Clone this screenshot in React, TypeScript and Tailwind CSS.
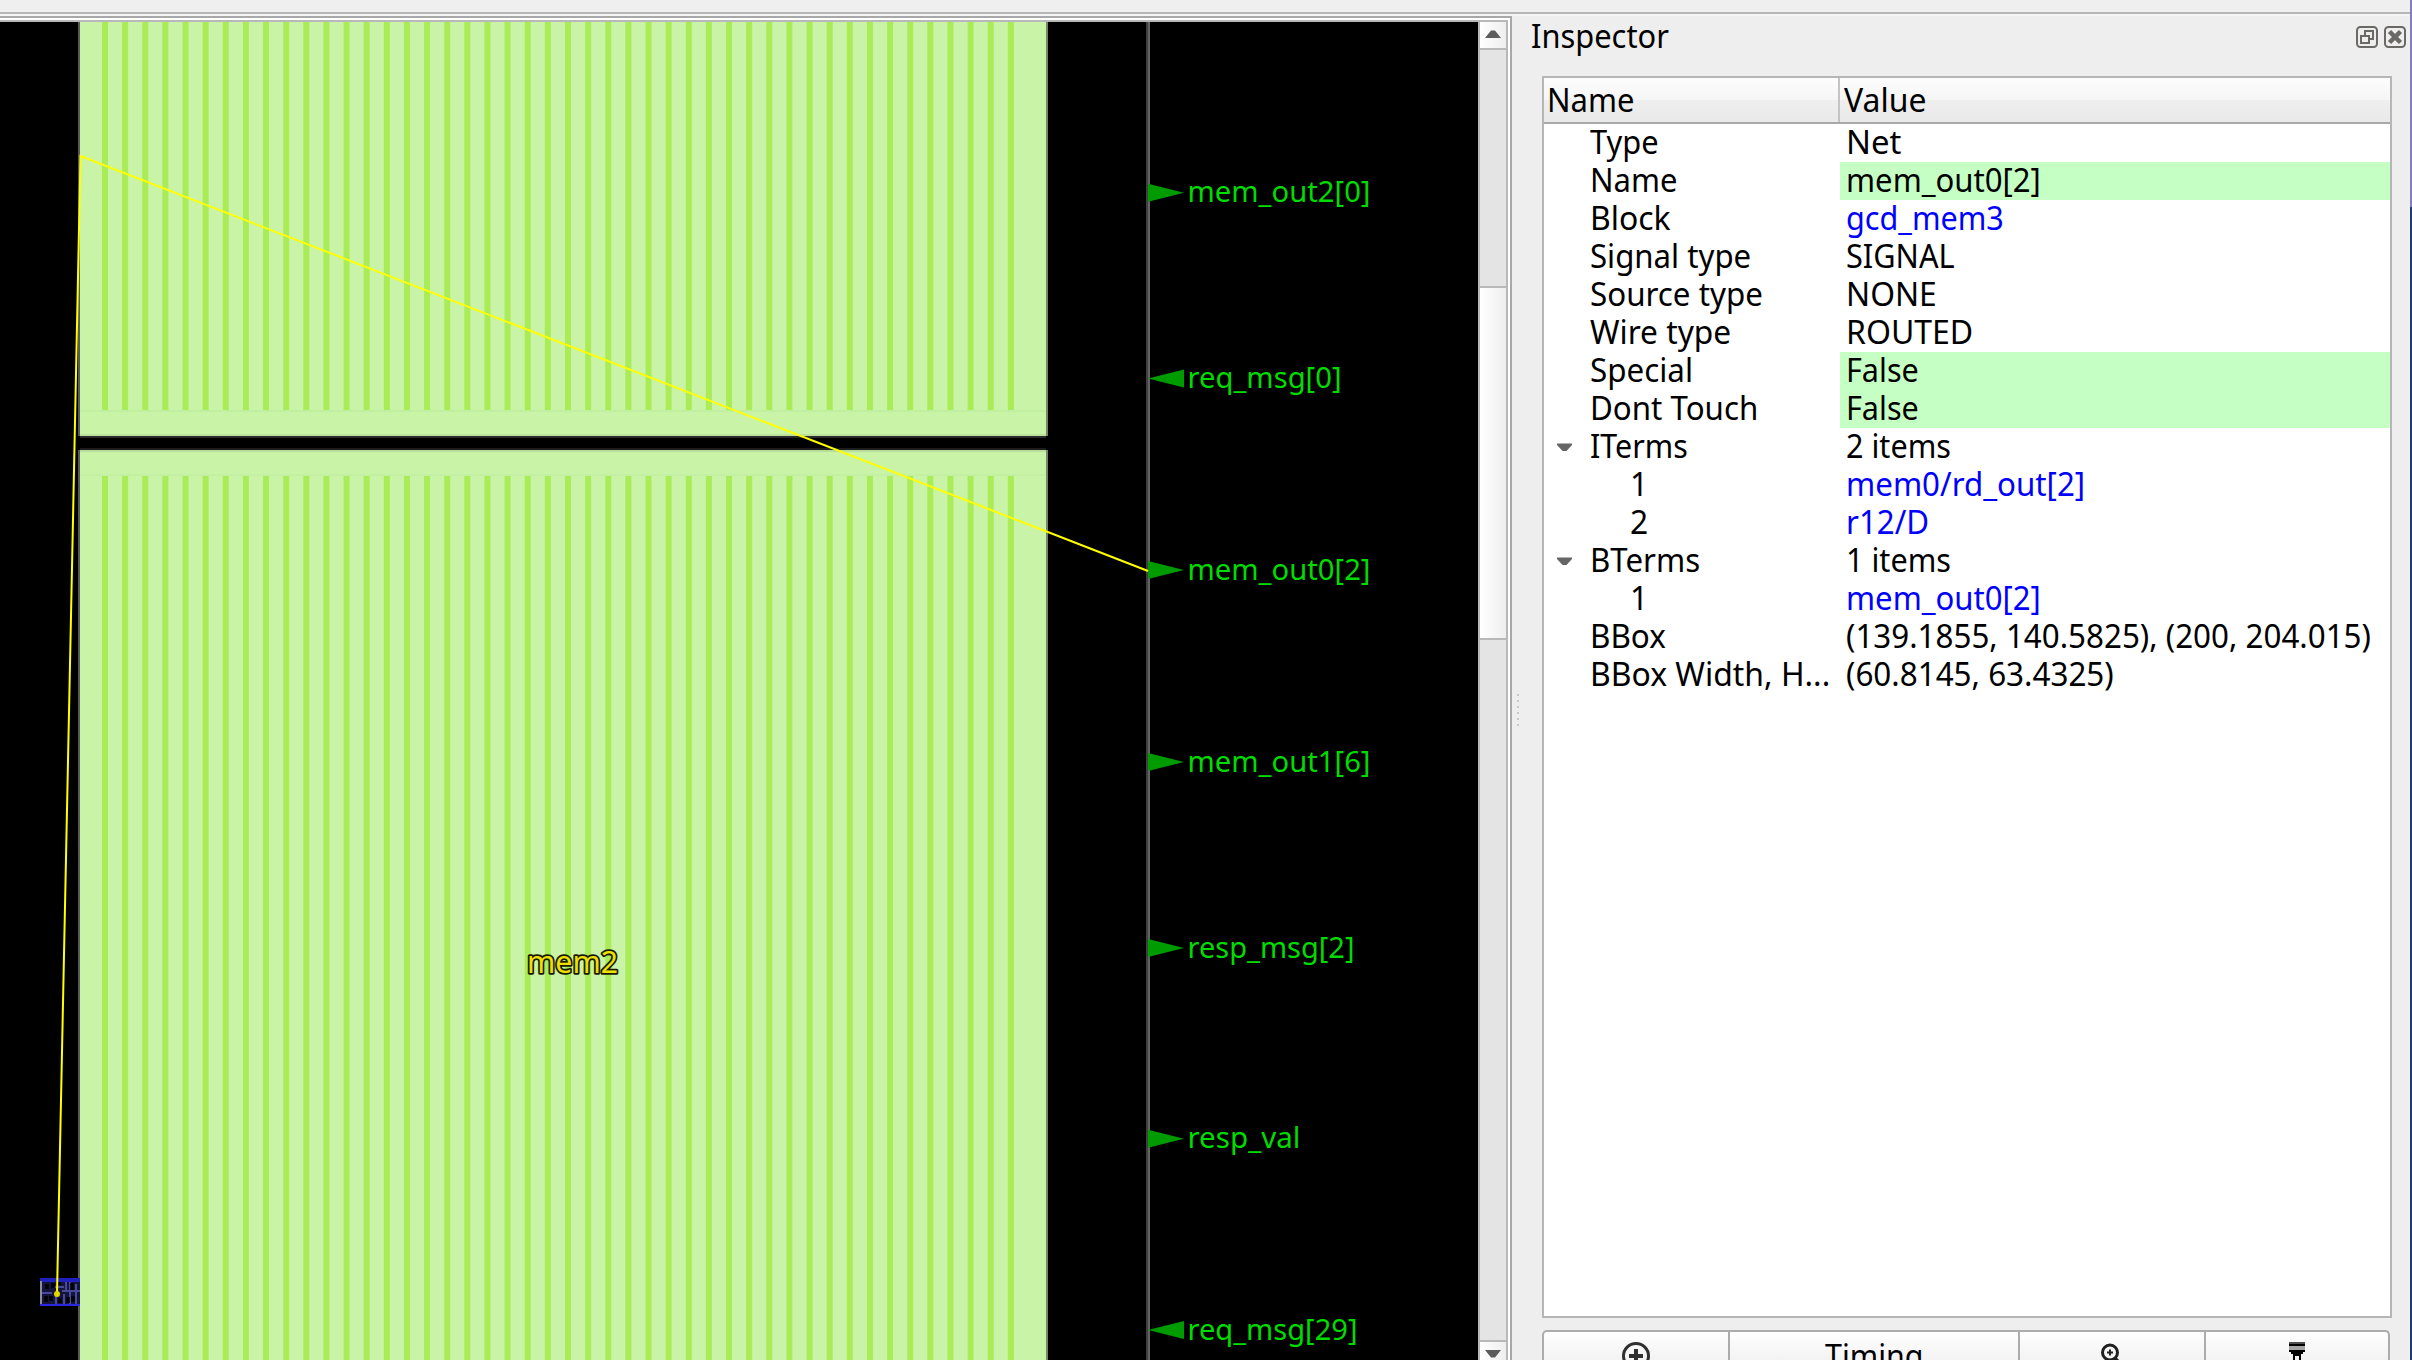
import { useLayoutEffect, useRef, type ReactNode } from "react";

/** Text squeezed or stretched horizontally to an exact width. */
function Fit({ w, children, className = "" }: { w: number; children: ReactNode; className?: string }) {
  const ref = useRef<HTMLSpanElement>(null);
  useLayoutEffect(() => {
    const el = ref.current;
    if (el) el.style.transform = `scaleX(${w / el.offsetWidth})`;
  }, [w]);
  return (
    <span className="block shrink-0" style={{ width: w }}>
      <span ref={ref} className={`inline-block origin-left whitespace-pre ${className}`}>
        {children}
      </span>
    </span>
  );
}

type Row = { name: string; nw: number; value: string; vw: number; kind?: "edit" | "link"; level?: 1; open?: boolean };

const rows: Row[] = [
  { name: "Type", nw: 69, value: "Net", vw: 55 },
  { name: "Name", nw: 87, value: "mem_out0[2]", vw: 195, kind: "edit" },
  { name: "Block", nw: 81, value: "gcd_mem3", vw: 158, kind: "link" },
  { name: "Signal type", nw: 161, value: "SIGNAL", vw: 109 },
  { name: "Source type", nw: 173, value: "NONE", vw: 91 },
  { name: "Wire type", nw: 141, value: "ROUTED", vw: 127 },
  { name: "Special", nw: 103, value: "False", vw: 73, kind: "edit" },
  { name: "Dont Touch", nw: 168, value: "False", vw: 73, kind: "edit" },
  { name: "ITerms", nw: 98, value: "2 items", vw: 105, open: true },
  { name: "1", nw: 18, value: "mem0/rd_out[2]", vw: 239, kind: "link", level: 1 },
  { name: "2", nw: 18, value: "r12/D", vw: 83, kind: "link", level: 1 },
  { name: "BTerms", nw: 110, value: "1 items", vw: 105, open: true },
  { name: "1", nw: 18, value: "mem_out0[2]", vw: 195, kind: "link", level: 1 },
  { name: "BBox", nw: 76, value: "(139.1855, 140.5825), (200, 204.015)", vw: 525 },
  { name: "BBox Width, H...", nw: 240, value: "(60.8145, 63.4325)", vw: 268 },
];

const pins = [
  { y: 192.7, label: "mem_out2[0]", w: 183, out: true },
  { y: 378.5, label: "req_msg[0]", w: 154, out: false },
  { y: 570, label: "mem_out0[2]", w: 183, out: true },
  { y: 762, label: "mem_out1[6]", w: 183, out: true },
  { y: 948, label: "resp_msg[2]", w: 167, out: true },
  { y: 1138.7, label: "resp_val", w: 113, out: true },
  { y: 1330, label: "req_msg[29]", w: 170, out: false },
];

const stripes = Array.from({ length: 46 }, (_, i) => 102 + i * 20.13);

function LayoutCanvas() {
  return (
    <svg width="1478" height="1338" viewBox="0 22 1478 1338" className="block shrink-0 bg-black">
      {/* standard cell cluster */}
      <g>
        <rect x="40" y="1278" width="40" height="28" fill="#14143c" />
        <path d="M42 1293h10M62 1291h18M54 1287h10M70 1280v24M64 1294v10M76 1284v20M56 1296v8M66 1282v8" stroke="#5656b0" strokeWidth="2" opacity=".8" fill="none" />
        <path d="M47 1284v5M53 1283v5M46 1296v6M51 1296v5M59 1282v3M60 1298v5M72 1283v7M68 1297v6M73 1296v6" stroke="#000" strokeWidth="3.5" />
        <rect x="40" y="1278" width="40" height="4" fill="#2020c0" />
        <rect x="40" y="1304" width="40" height="2" fill="#2828e0" />
        <rect x="40" y="1281" width="2" height="23" fill="#8c8ca0" />
      </g>
      {/* macros */}
      <rect x="78" y="22" width="2" height="414" fill="#5a5a5a" />
      <rect x="80" y="22" width="966" height="414" fill="#c9f3a7" />
      <rect x="80" y="410" width="966" height="2" fill="#c0efa0" />
      <rect x="80" y="434" width="966" height="2" fill="#bbe19c" />
      <rect x="80" y="436" width="966" height="2" fill="#2b2b2b" />
      <rect x="1046" y="22" width="2" height="414" fill="#75846b" />
      <rect x="80" y="448" width="966" height="2" fill="#1c1c1c" />
      <rect x="78" y="450" width="2" height="828" fill="#5a5a5a" />
      <rect x="78" y="1306" width="2" height="54" fill="#5a5a5a" />
      <rect x="80" y="450" width="966" height="910" fill="#c9f3a7" />
      <rect x="80" y="450" width="966" height="2" fill="#b8dd9a" />
      <rect x="80" y="474" width="966" height="2" fill="#c4f0a3" />
      <rect x="1046" y="450" width="2" height="910" fill="#75846b" />
      {stripes.map((x) => (
        <g key={x} fill="#a9ec57">
          <rect x={x} y="22" width="6" height="388" />
          <rect x={x} y="476" width="6" height="884" />
        </g>
      ))}
      {/* die edge */}
      <rect x="1146" y="22" width="2" height="1338" fill="#404040" />
      <rect x="1148" y="22" width="2" height="1338" fill="#636363" />
      {pins.map((p) => (
        <g key={p.label}>
          <path
            d={p.out ? `M1148 ${p.y - 9}L1184 ${p.y}L1148 ${p.y + 9}Z` : `M1148 ${p.y}L1184 ${p.y - 9}V${p.y + 9}Z`}
            fill="#009b00"
          />
          <text x="1187.5" y={p.y + 9.5} textLength={p.w} lengthAdjust="spacingAndGlyphs" fontSize="29" fill="#00dc00">
            {p.label}
          </text>
        </g>
      ))}
      {/* highlighted net */}
      <path d="M57 1294L80.5 156L1148 571" fill="none" stroke="#ffff00" strokeWidth="2" />
      <circle cx="57" cy="1294" r="3" fill="#e0d800" />
      <text
        x="527" y="972.5" textLength="91" lengthAdjust="spacingAndGlyphs" fontSize="31"
        fill="#f0e000" stroke="#1a1a00" strokeWidth="3.6" strokeLinejoin="round" paintOrder="stroke"
      >
        mem2
      </text>
    </svg>
  );
}

function ScrollBar() {
  return (
    <div className="flex w-[30px] shrink-0 flex-col border-x-2 border-[#b8b8b8] bg-[#e4e4e4]">
      <div className="flex h-[28px] shrink-0 justify-center border-b-2 border-[#b8b8b8] bg-linear-to-r from-white to-[#eeeeee]">
        <svg width="16" height="26" viewBox="0 0 16 26"><path d="M0 16L6 8.500h4L16 16z" fill="#5c5c5c" /></svg>
      </div>
      <div className="h-[236px] shrink-0" />
      <div className="h-[354px] shrink-0 border-y-2 border-[#b8b8b8] bg-linear-to-r from-white to-[#eeeeee]" />
      <div className="h-[700px] shrink-0" />
      <div className="flex h-[20px] shrink-0 justify-center border-t-2 border-[#b8b8b8] bg-linear-to-r from-white to-[#eeeeee]">
        <svg width="16" height="18" viewBox="0 0 16 18"><path d="M0 8h16L10 15.500h-4z" fill="#5c5c5c" /></svg>
      </div>
    </div>
  );
}

function TreeRow({ row }: { row: Row }) {
  return (
    <div className="flex h-[38px] shrink-0">
      <div className="flex w-[296px] shrink-0">
        <div className={row.level ? "w-[86px]" : "w-[46px]"}>
          {row.open && (
            <svg width="46" height="38" viewBox="0 0 46 38"><path d="M13 15.500h15v1.500l-5.500 6h-4l-5.500-6z" fill="#666" /></svg>
          )}
        </div>
        <Fit w={row.nw}>{row.name}</Fit>
      </div>
      <div
        className={
          row.kind === "edit" ? "grow bg-[#c5ffc3] pl-1.5" : row.kind === "link" ? "grow pl-1.5 text-[#0000ff]" : "grow pl-1.5"
        }
      >
        <Fit w={row.vw}>{row.value}</Fit>
      </div>
    </div>
  );
}

function Inspector() {
  return (
    <section className="flex w-[878px] shrink-0 flex-col">
      <header className="flex h-[60px] shrink-0 justify-between pr-1">
        <div className="-ml-[1px] pt-[2px]"><Fit w={138}>Inspector</Fit></div>
        <div className="flex gap-[6px] pt-[10px]">
          <svg width="22" height="22" viewBox="0 0 22 22" fill="none" stroke="#6b6966" strokeWidth="2">
            <rect x="1" y="1" width="20" height="20" rx="3.500" />
            <path d="M5 10h8v7H5zM9 9V5h8v8h-3" />
          </svg>
          <svg width="22" height="22" viewBox="0 0 22 22" fill="none" stroke="#6b6966" strokeWidth="2">
            <rect x="1" y="1" width="20" height="20" rx="3.500" />
            <path d="M5.500 5.500l11 11M16.500 5.500l-11 11" strokeWidth="4.500" />
          </svg>
        </div>
      </header>
      <div className="ml-[10px] flex h-[1242px] w-[850px] shrink-0 flex-col border-2 border-[#b6b6b6] bg-white">
        <div className="flex h-[46px] shrink-0 border-b-2 border-[#a8a8a8] bg-[linear-gradient(#fdfdfd,#f5f5f5_50%,#efefef_50%,#e9e9e9)]">
          <div className="w-[296px] border-r-2 border-[#c4c4c4] pl-[3px] pt-[4px]"><Fit w={87}>Name</Fit></div>
          <div className="pl-1 pt-[4px]"><Fit w={82}>Value</Fit></div>
        </div>
        {rows.map((r, i) => <TreeRow key={i} row={r} />)}
      </div>
      <div className="ml-[10px] mt-[12px] flex h-[30px] w-[848px] shrink-0 overflow-hidden rounded-t-[5px] border-x-2 border-t-2 border-[#acacac] bg-linear-to-b from-[#fefefe] to-[#f3f3f3]">
        <div className="flex w-[186px] shrink-0 justify-center border-r-2 border-[#acacac]">
          <svg width="30" height="28" viewBox="0 0 30 28" fill="none" stroke="#303030" strokeWidth="3">
            <circle cx="15" cy="24" r="12.500" /><path d="M15 17v11M8 24h14" strokeWidth="4" />
          </svg>
        </div>
        <div className="flex w-[290px] shrink-0 justify-center border-r-2 border-[#acacac] pt-[6px]"><Fit w={99}>Timing</Fit></div>
        <div className="flex w-[186px] shrink-0 justify-center border-r-2 border-[#acacac]">
          <svg width="30" height="28" viewBox="0 0 30 28" fill="none" stroke="#202020" strokeWidth="3">
            <circle cx="13" cy="20.500" r="7.500" /><path d="M13 17.500v6M10 20.500h6" strokeWidth="2" /><path d="M18 26l4 4" />
          </svg>
        </div>
        <div className="flex grow justify-center">
          <svg width="20" height="28" viewBox="0 0 20 28">
            <path d="M2 10h16v2H2z" fill="#505050" /><path d="M2 12h16v2H2z" fill="#000" />
            <path d="M2 14h16v4H2z" fill="#a4a4a4" />
            <path d="M2 18h16v2h-2v2h-2v6h-2v-4H8v4H6v-6H4v-2H2z" fill="#000" />
          </svg>
        </div>
      </div>
    </section>
  );
}

export default function App() {
  return (
    <div className="flex h-[1360px] w-[2412px] overflow-hidden bg-[#eeeeee] font-['Noto_Sans',sans-serif] text-[33.5px] leading-[34px] text-black">
      <div className="flex w-[2410px] shrink-0 flex-col">
        <div className="h-[16px] shrink-0 border-b-2 border-[#f5f5f5] bg-[#efefef]">
          <div className="h-[14px] border-b-2 border-[#b6b6b6]" />
        </div>
        <div className="flex grow">
          <div className="h-[1344px] w-[1512px] shrink-0 border-r-2 border-t-2 border-[#a8a8a8] bg-white pr-0.5 pt-0.5">
            <div className="flex h-[1340px] border-t-2 border-[#b8b8b8]">
              <LayoutCanvas />
              <ScrollBar />
            </div>
          </div>
          <div className="flex w-[20px] shrink-0 flex-col gap-[4px] pl-[5px] pt-[678px]">
            {[0, 1, 2, 3, 4, 5].map((i) => (
              <div key={i} className="size-[2px] shrink-0 bg-[#c8c8c8]" />
            ))}
          </div>
          <Inspector />
        </div>
      </div>
      <div className="w-[2px] shrink-0 bg-[linear-gradient(#8080b8_0_207px,#1f3d6b_207px)]" />
    </div>
  );
}
